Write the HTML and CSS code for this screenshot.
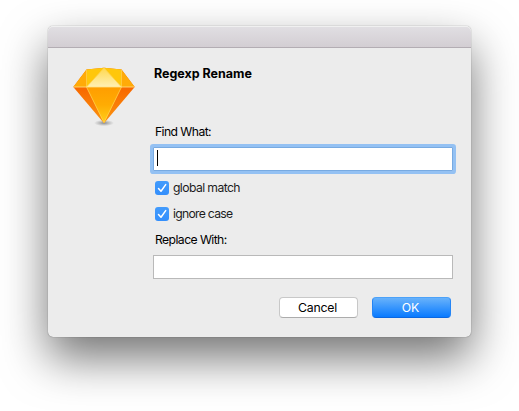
FILE: index.html
```html
<!DOCTYPE html>
<html lang="en">
<head>
<meta charset="utf-8">
<title>Regexp Rename</title>
<link rel="stylesheet" href="styles.css">
</head>
<body>
<main class="dialog">
  <header class="titlebar"></header>
  <form class="content">
    <svg class="logo" viewBox="0 0 64 62" aria-hidden="true">
      <defs>
        <linearGradient id="front" x1="0" y1="0" x2="0" y2="1"><stop offset="0" stop-color="#ff9d00"/><stop offset=".5" stop-color="#ffac03"/><stop offset="1" stop-color="#ffd01c"/></linearGradient>
        <linearGradient id="side" x1="0" y1="0" x2="0" y2="1"><stop offset="0" stop-color="#f86a00"/><stop offset=".4" stop-color="#f86a00"/><stop offset="1" stop-color="#fb9510"/></linearGradient>
        <linearGradient id="top" x1="0" y1="0" x2="0" y2="1"><stop offset="0" stop-color="#ffd850"/><stop offset="1" stop-color="#fff0b4"/></linearGradient>
        <radialGradient id="shade"><stop offset="0" stop-color="#555" stop-opacity=".65"/><stop offset="1" stop-color="#777" stop-opacity="0"/></radialGradient>
      </defs>
      <ellipse cx="32" cy="57" rx="10" ry="3.2" fill="url(#shade)"/>
      <path d="M1.3 21 14.5 3.5 32 1.8 49.5 3.5 62.7 21 32 57.3Z" fill="url(#side)"/>
      <path d="M1.3 21 14.5 3.5V21ZM62.7 21 49.5 3.5V21Z" fill="#ffab08"/>
      <path d="M14.5 21V3.5L32 1.8 49.5 3.5V21Z" fill="#ffc70b"/>
      <path d="M14.5 21 32 2 49.5 21Z" fill="url(#top)"/>
      <path d="M14.5 21H49.5L32 57Z" fill="url(#front)"/>
      <path d="M14.5 21 32 56.5 49.5 21M14.5 21V4M49.5 21V4M14.5 21 32 2 49.5 21" fill="none" stroke="#ffd24d" stroke-width=".8"/>
      <path d="M1.8 21H62.2" stroke="#ffe388" stroke-width=".8"/>
    </svg>
    <div class="form">
      <h1 class="title"><span>Regexp Rename</span></h1>
      <label class="label find-label"><span>Find What:</span></label>
      <div class="field focused"><span class="caret"></span></div>
      <label class="option"><span class="check"><svg viewBox="0 0 14 14"><path d="M3.5 7.5 6 10.3 10.7 3.6"/></svg></span><span>global match</span></label>
      <label class="option ignore-case"><span class="check"><svg viewBox="0 0 14 14"><path d="M3.5 7.5 6 10.3 10.7 3.6"/></svg></span><span>ignore case</span></label>
      <label class="label replace-label"><span>Replace With:</span></label>
      <div class="field"></div>
      <div class="actions">
        <button type="button" class="button">Cancel</button>
        <button type="button" class="button primary">OK</button>
      </div>
    </div>
  </form>
</main>
</body>
</html>
```
FILE: styles.css
```css
* { box-sizing: border-box; }

body {
  margin: 0;
  padding: 26px 48px 0;
  height: 411px;
  overflow: hidden;
  background: #fff;
  color: #000;
  font: 12.2px/16px Inter, "Liberation Sans", sans-serif;
}

.dialog {
  width: 423px;
  height: 311px;
  border-radius: 5px;
  background: #ececec;
  box-shadow: 0 0 1px rgba(0, 0, 0, .6), 0 21px 46px rgba(0, 0, 0, .55);
}

.titlebar {
  height: 22px;
  border-bottom: 1px solid #b3adb3;
  border-radius: 5px 5px 0 0;
  background: linear-gradient(#e1dfe3, #d3ced3);
  box-shadow: inset 0 1px #f0f0f0;
}

.content {
  display: flex;
  padding: 18px 18px 0 24px;
}

.logo {
  flex: none;
  width: 64px;
  height: 62px;
}

.form {
  width: 300px;
  margin-left: 17px;
}

.title {
  margin: 0 0 0 1px;
  font-size: 12.5px;
  line-height: 16px;
  font-weight: 700;
  letter-spacing: -.02px;
}

.label {
  display: block;
  height: 16px;
  margin-left: 2px;
  letter-spacing: -.58px;
}

.find-label { margin-top: 42px; }
.replace-label { margin-top: 5px; }

.field {
  height: 24px;
  margin-top: 7px;
  padding: 3px;
  border: 1px solid #b9b9b9;
  background: #fff;
}

.focused {
  margin-bottom: 4px;
  padding-top: 2px;
  border-color: #78aae1;
  box-shadow: 0 0 0 3px #94c1f3;
  border-radius: 1px;
}

.caret {
  display: block;
  width: 1px;
  height: 16px;
  background: #000;
}

.option {
  display: flex;
  align-items: center;
  gap: 4px;
  height: 26px;
  margin-left: 2px;
  letter-spacing: -.6px;
  color: #1c1c1c;
}

.ignore-case { letter-spacing: -.72px; }

.check {
  width: 14px;
  height: 14px;
  border-radius: 3px;
  background: linear-gradient(#429bfc, #348ffc);
}

.check svg {
  display: block;
  fill: none;
  stroke: #fff;
  stroke-width: 1.5;
  stroke-linecap: round;
  stroke-linejoin: round;
}

.actions {
  display: flex;
  justify-content: flex-end;
  gap: 14px;
  margin: 18px 2px 0 0;
}

.button {
  width: 79px;
  height: 21px;
  padding: 0 2px 0 0;
  border: 1px solid #c8c8c8;
  border-bottom-color: #acacac;
  border-radius: 4px;
  background: #fff;
  color: #000;
  font: 12.3px/19px Inter, "Liberation Sans", sans-serif;
  letter-spacing: -.2px;
}

.primary {
  border-color: #4ca2f9 #2585f5 #0b67e0;
  background: linear-gradient(#68b2fb, #087aff);
  color: #fff;
}
```
